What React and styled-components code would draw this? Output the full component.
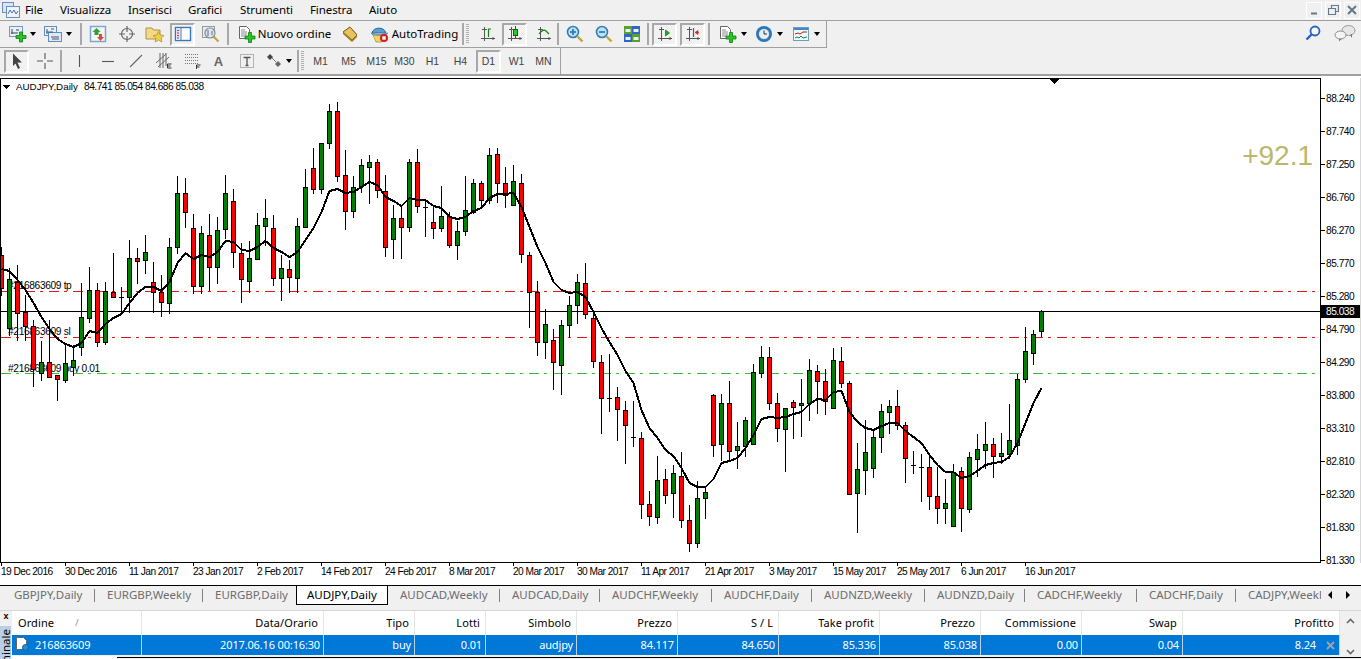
import styled, { createGlobalStyle } from 'styled-components';

const GlobalStyle = createGlobalStyle`
  html, body { margin: 0; padding: 0; background: #f0f0f0; overflow: hidden; }
  body { font-family: "Noto Sans", "Open Sans", sans-serif; font-size: 12px; color: #000; }
`;

const Page = styled.div`
  width: 1361px;
  height: 659px;
  overflow: hidden;
  display: flex;
  flex-direction: column;
`;

/* --- menu --- */
const MenuBar = styled.div`
  height: 20px;
  display: flex;
  align-items: center;
  padding-left: 2px;
`;
const MenuList = styled.div`
  display: flex;
  margin-left: 5px;
  flex: 1;
  padding-bottom: 2px;
`;
const MenuItem = styled.span`
  width: ${(p) => p.$w}px;
  font-size: 11.5px;
  letter-spacing: -0.1px;
  white-space: nowrap;
`;
const WindowBtns = styled.div`
  display: flex;
  gap: 3px;
  padding-right: 1px;
`;
const WindowBtn = styled.div`
  width: 16px;
  height: 17px;
  border: 1px solid #fff;
  display: flex;
  align-items: center;
  justify-content: center;
  box-sizing: border-box;
`;

/* --- toolbars --- */
const ToolArea = styled.div`
  border-top: 1px solid #a0a0a0;
  border-bottom: 2px solid #a0a0a0;
`;
const ToolRow = styled.div`
  display: flex;
  align-items: stretch;
  justify-content: space-between;
`;
const Toolbar = styled.div`
  width: ${(p) => p.$w}px;
  height: ${(p) => (p.$line ? 27 : 26)}px;
  display: flex;
  align-items: center;
  padding-left: ${(p) => p.$pad}px;
  box-sizing: border-box;
  border-right: 1px solid #a0a0a0;
  border-bottom: ${(p) => (p.$line ? '1px solid #a0a0a0' : 'none')};
`;
const ToolBtn = styled.div`
  width: ${(p) => p.$w || 25}px;
  height: 23px;
  margin-left: ${(p) => p.$ml || 0}px;
  flex: none;
  box-sizing: border-box;
  display: flex;
  align-items: center;
  justify-content: center;
  gap: ${(p) => p.$gap || 0}px;
  border: 1px solid transparent;
  font-size: 11.5px;
  letter-spacing: 0;
  white-space: nowrap;
  ${(p) =>
    p.$active &&
    `border-color: #a8a8a8 #fff #fff #a8a8a8;
     border-width: 2px;
     background: repeating-conic-gradient(#f7f7f7 0 25%, #ececec 0 50%) 0 0 / 2px 2px;`}
`;
const BtnText = styled.span`
  padding-bottom: 2px;
`;
const PeriodBtn = styled(ToolBtn)`
  font-family: "Liberation Sans", Arial, sans-serif;
  font-size: 10.5px;
  color: #444;
`;
const Sep = styled.div`
  width: 2px;
  height: 22px;
  background: #a8a8a8;
  margin-left: ${(p) => p.$ml || 0}px;
  flex: none;
`;
const Grip = styled.div`
  width: 3px;
  height: 20px;
  margin-left: ${(p) => p.$ml || 0}px;
  flex: none;
  background: repeating-linear-gradient(to bottom, #b0b0b0 0 1px, #f0f0f0 1px 2px);
`;
const ToolRight = styled.div`
  display: flex;
  align-items: center;
  gap: 12px;
  padding: 0 5px 3px 0;
`;
const Drop = styled.span`
  width: 0;
  height: 0;
  border-left: 3.5px solid transparent;
  border-right: 3.5px solid transparent;
  border-top: 4px solid #000;
  flex: none;
`;

/* --- chart --- */
const ChartWrap = styled.div`
  background: #fff;
  padding-top: 2px;
`;
const ChartRow = styled.div`
  display: flex;
  height: 485px;
`;
const Plot = styled.svg`
  width: 1321px;
  height: 485px;
  display: block;
  flex: none;
`;
const ChartLabel = styled.text`
  font-family: "Liberation Sans", Arial, sans-serif;
  font-size: ${(p) => p.$size || 10.2}px;
  letter-spacing: ${(p) => p.$ls ?? -0.35}px;
  fill: ${(p) => p.$color || '#000'};
`;
const PriceAxis = styled.div`
  position: relative;
  flex: 1;
  padding-top: 4px;
  font-family: "Liberation Sans", Arial, sans-serif;
  font-size: 10.2px;
  letter-spacing: -0.5px;
  border-right: 1px solid #d8d8d8;
`;
const PriceRow = styled.div`
  height: 33px;
  line-height: 33px;
  padding-left: 5px;
  position: relative;
  &::before {
    content: '';
    position: absolute;
    left: 0;
    top: 16px;
    width: 4px;
    height: 1px;
    background: #000;
  }
`;
const PriceTag = styled.div`
  position: absolute;
  left: 0;
  right: 0;
  top: 227px;
  height: 13px;
  line-height: 13px;
  padding-left: 5px;
  background: #000;
  color: #fff;
`;
const TimeAxis = styled.div`
  height: 22px;
  display: grid;
  grid-template-columns: repeat(17, 64px);
  padding-left: 1px;
  font-family: "Liberation Sans", Arial, sans-serif;
  font-size: 10.2px;
  letter-spacing: -0.55px;
`;
const TimeCell = styled.div`
  position: relative;
  white-space: nowrap;
  line-height: 17px;
  &::before {
    content: '';
    position: absolute;
    left: 0;
    top: -1px;
    width: 1px;
    height: 4px;
    background: #000;
  }
`;

/* --- tabs --- */
const TabBar = styled.div`
  height: 19px;
  border-top: 1px solid #000;
  display: flex;
  align-items: stretch;
  position: relative;
`;
const Tab = styled.div`
  width: ${(p) => p.$w}px;
  flex: none;
  box-sizing: border-box;
  padding-left: ${(p) => p.$pad || 12}px;
  line-height: 17px;
  white-space: nowrap;
  overflow: hidden;
  font-size: 11.5px;
  color: ${(p) => (p.$active ? '#000' : '#6d6d6d')};
  position: relative;
  ${(p) =>
    p.$active
      ? `background:#fff; border:1px solid #000; border-top:none;`
      : p.$sep
        ? `&::after{content:'';position:absolute;right:0;top:3px;width:1px;height:13px;background:#808080;}`
        : ''}
`;
const TabArrows = styled.div`
  position: absolute;
  right: 0;
  top: 0;
  width: 40px;
  height: 18px;
  background: #f0f0f0;
  display: flex;
  align-items: center;
  justify-content: space-around;
  padding: 0 4px 0 0;
  box-sizing: border-box;
`;
const ArrowL = styled.span`
  border-top: 4px solid transparent;
  border-bottom: 4px solid transparent;
  border-right: 4px solid #000;
`;
const ArrowR = styled.span`
  border-top: 4px solid transparent;
  border-bottom: 4px solid transparent;
  border-left: 4px solid #000;
`;

/* --- terminal --- */
const Terminal = styled.div`
  margin-top: 5px;
  flex: 1;
  display: flex;
  position: relative;
  min-height: 0;
  border-top: 1px solid #d6d6d6;
`;
const SideStrip = styled.div`
  width: 12px;
  flex: none;
  display: flex;
  flex-direction: column;
  align-items: center;
`;
const SideClose = styled.div`
  height: 15px;
  font: bold 9px "Liberation Sans", Arial, sans-serif;
  line-height: 11px;
`;
const SideTab = styled.div`
  flex: 1;
  width: 11px;
  margin-right: 1px;
  background: #b9cfe6;
  overflow: hidden;
  display: flex;
  flex-direction: column;
  align-items: center;
`;
const SideText = styled.span`
  writing-mode: vertical-rl;
  transform: rotate(180deg);
  flex: none;
  font-size: 11.5px;
  line-height: 11px;
  white-space: nowrap;
  padding-bottom: 3px;
`;
const TableBox = styled.div`
  width: 1328px;
  flex: none;
  display: flex;
  flex-direction: column;
`;
const TableRow = styled.div`
  display: flex;
  height: ${(p) => p.$h}px;
  background: ${(p) => p.$bg};
  color: ${(p) => p.$fg};
`;
const Cell = styled.div`
  width: ${(p) => p.$w}px;
  flex: none;
  box-sizing: border-box;
  display: flex;
  align-items: center;
  justify-content: ${(p) => (p.$pl ? 'flex-start' : 'flex-end')};
  gap: 6px;
  padding: ${(p) => (p.$pl ? `0 0 2px ${p.$pl}px` : `0 ${p.$pr}px 2px 0`)};
  border-right: 1px solid ${(p) => p.$line};
  font-size: 11px;
  letter-spacing: ${(p) => p.$ls || 0}px;
  white-space: nowrap;
`;
const HeadSort = styled.span`
  color: #888;
  font-size: 9px;
  margin-left: 15px;
`;
const RowClose = styled.svg`
  position: absolute;
  left: 1326px;
  top: 30px;
  width: 9px;
  height: 9px;
`;
const Scroll = styled.div`
  flex: 1;
  display: flex;
  flex-direction: column;
  align-items: center;
  justify-content: space-between;
  height: 44px;
  padding: 7px 0 0;
  box-sizing: border-box;
`;
const Footer = styled.div`
  height: 4px;
  display: flex;
  position: absolute;
  left: 12px;
  right: 0;
  top: 45px;
`;
const FooterTab = styled.div`
  width: 105px;
  background: #fff;
  height: 5px;
`;
const FooterLine = styled.div`
  flex: 1;
  border-top: 1px solid #000;
  margin-top: 1px;
`;

/* --- icons --- */
const Ico = ({ w = 18, h = 18, children }) => (
  <svg width={w} height={h} viewBox={`0 0 ${w} ${h}`} style={{ flex: 'none' }}>{children}</svg>
);
const Plus = ({ x = 0, y = 0 }) => (
  <path
    transform={`translate(${x} ${y})`}
    d="M3.5 0h3v3.5H10v3H6.500V10h-3V6.500H0v-3h3.500z"
    fill="#27c427"
    stroke="#0e7d0e"
    strokeWidth="0.8"
  />
);
const NewChartIcon = () => (
  <Ico>
    <rect x="0.500" y="1.500" width="13" height="10" fill="#e8f1fa" stroke="#6e9cc6" />
    <path d="M3 4v5M2 8h7M7 5h3" stroke="#444" fill="none" />
    <Plus x={7} y={7} />
  </Ico>
);
const ProfileIcon = () => (
  <Ico>
    <rect x="0.500" y="1.500" width="12" height="9" fill="#e8f1fa" stroke="#5f8fbd" />
    <rect x="4.500" y="7.500" width="13" height="9" fill="#dde9f5" stroke="#5f8fbd" />
    <path d="M3 4v5M2 7h7M7 4h3M7 12h8M8 14h7" stroke="#556" fill="none" />
  </Ico>
);
const WatchIcon = () => (
  <Ico>
    <rect x="1.500" y="1.500" width="15" height="15" fill="#f6f6f6" stroke="#79a7cf" strokeWidth="1.500" />
    <path d="M7.500 3l4 4h-2v3h-4V7h-2z" fill="#2da52d" />
    <path d="M10 9h3v3h2l-3.500 4L8 12h2z" fill="#e04a2a" />
  </Ico>
);
const CrossIcon = () => (
  <Ico>
    <circle cx="9" cy="9" r="5.500" fill="none" stroke="#666" strokeWidth="1.200" />
    <path d="M9 1v6M9 11v6M1 9h6M11 9h6" stroke="#666" strokeWidth="1.200" />
  </Ico>
);
const FolderStarIcon = () => (
  <Ico w={20}>
    <path d="M1 3h6l1.500 2H15v9H1z" fill="#f3d98a" stroke="#b09040" />
    <path d="M13.500 6.500l1.700 3.500 3.800.5-2.800 2.600.7 3.900-3.400-1.900-3.400 1.900.7-3.900L8 10.500l3.800-.5z" fill="#f2cf4a" stroke="#a98a2a" strokeWidth="0.700" />
  </Ico>
);
const NavIcon = () => (
  <Ico>
    <rect x="1.500" y="2.500" width="15" height="13" fill="#fff" stroke="#3a78b8" strokeWidth="1.400" />
    <rect x="2" y="3" width="4" height="12" fill="#d6e6f5" />
    <path d="M3 5.500h2M3 8h2M3 10.500h2M3 13h2" stroke="#d23030" />
    <path d="M7 3v12" stroke="#3a78b8" />
  </Ico>
);
const ChartZoomIcon = () => (
  <Ico>
    <rect x="0.500" y="1.500" width="12" height="11" fill="#e9e9e9" stroke="#999" />
    <circle cx="8" cy="8" r="5" fill="#dbe7f2" stroke="#7c8ea0" strokeWidth="1.200" />
    <path d="M6 5v6M10 6v4" stroke="#667" />
    <path d="M11.500 11.500l5 5" stroke="#c9a23a" strokeWidth="2.200" />
  </Ico>
);
const OrderIcon = () => (
  <Ico>
    <path d="M1.500 1.500h7l3 3v9h-10z" fill="#fff" stroke="#666" />
    <path d="M3 5h4M3 7h6M3 9h6M3 11h5" stroke="#888" />
    <Plus x={7} y={7.500} />
  </Ico>
);
const GoldIcon = () => (
  <Ico>
    <path d="M2 7l7-5 7 8-5 5z" fill="#d6a93e" stroke="#7a5a1a" />
    <path d="M2 7l9 8 5-5-7-8z" fill="#e8c25e" stroke="#7a5a1a" strokeWidth="0.800" />
    <path d="M2 7v2l9 8v-2zM16 10v2l-5 5v-2z" fill="#a47a22" />
  </Ico>
);
const AutoIcon = () => (
  <Ico w={20}>
    <path d="M2 8c1-6 12-7 14 0z" fill="#5a9fd4" stroke="#2a6a9a" />
    <path d="M1 8c4 2 12 2 17 0l-2 2c-3 1.500-10 1.500-13 0z" fill="#9fc8e8" stroke="#2a6a9a" strokeWidth="0.600" />
    <path d="M3 10l10 1-1 6H6z" fill="#efd56a" stroke="#a68a2a" strokeWidth="0.700" />
    <circle cx="14" cy="13" r="4" fill="#d81c1c" />
    <rect x="12.300" y="11.300" width="3.400" height="3.400" fill="#fff" />
  </Ico>
);
const LineAxes = ({ children }) => (
  <Ico>
    <path d="M5.500 2v14M2 13.500h14M3 4.500h5M14 12v3" stroke="#555" fill="none" />
    {children}
  </Ico>
);
const BarIcon = () => <LineAxes><path d="M9.500 12V4H12" stroke="#0a8a0a" strokeWidth="1.200" fill="none" /></LineAxes>;
const CandleIcon = () => (
  <LineAxes>
    <path d="M9.500 1v13" stroke="#0a7a0a" />
    <rect x="7.500" y="4.500" width="4" height="6" fill="#1fd11f" stroke="#0a6a0a" />
  </LineAxes>
);
const CurveIcon = () => <LineAxes><path d="M4 9c2-3 5-5 7-3l3 3" stroke="#0a8a0a" strokeWidth="1.200" fill="none" /></LineAxes>;
const ZoomIcon = ({ plus }) => (
  <Ico>
    <circle cx="7" cy="7" r="5.500" fill="#bfe0f5" stroke="#2f7fb5" strokeWidth="1.600" />
    <path d="M4 7h6" stroke="#2f7fb5" strokeWidth="1.800" />
    {plus && <path d="M7 4v6" stroke="#2f7fb5" strokeWidth="1.800" />}
    <path d="M11.500 11.500l5 5" stroke="#c9a23a" strokeWidth="2.400" />
  </Ico>
);
const TileIcon = () => (
  <Ico>
    <rect x="1" y="1" width="8" height="8" fill="#58a02c" />
    <rect x="9" y="1" width="8" height="8" fill="#2e66c8" />
    <rect x="1" y="9" width="8" height="8" fill="#2e66c8" />
    <rect x="9" y="9" width="8" height="8" fill="#58a02c" />
    <path d="M2.500 4h5v3h-5zM10.500 4h5v3h-5zM2.500 12h5v3h-5zM10.500 12h5v3h-5z" fill="#e8f0f8" />
  </Ico>
);
const ScrollIcon = () => <LineAxes><path d="M9.500 5v6l4-3z" fill="#19b019" stroke="#0a7a0a" strokeWidth="0.700" /></LineAxes>;
const ShiftIcon = () => (
  <LineAxes>
    <path d="M9.500 3v9" stroke="#3458a8" strokeWidth="1.200" />
    <path d="M15 7.500h-3M14 5.500l-3 2 3 2z" fill="#d83010" stroke="#d83010" strokeWidth="0.800" />
  </LineAxes>
);
const ClockIcon = () => (
  <Ico>
    <circle cx="9" cy="9" r="8" fill="#2a78b8" />
    <circle cx="9" cy="9" r="5.500" fill="#e6eef6" stroke="#145a90" strokeWidth="0.600" />
    <path d="M9 5.500V9h3" stroke="#333" fill="none" />
  </Ico>
);
const TemplateIcon = () => (
  <Ico>
    <rect x="1.500" y="2.500" width="15" height="13" fill="#f2f7fb" stroke="#6a9cc8" />
    <rect x="2" y="3" width="14" height="2" fill="#4a86c0" />
    <path d="M3 9l3-1 2 1 3-2 4 0" stroke="#a82020" fill="none" />
    <path d="M3 13l2-1 2 1 2-2 2 2 4-1" stroke="#178a17" fill="none" />
  </Ico>
);
const PointerIcon = () => (
  <Ico><path d="M5 1.500l9 9H9.500l2.500 5.500-2 1-2.500-5.500L5 14z" fill="#444" /></Ico>
);
const LinesCrossIcon = () => (
  <Ico><path d="M9 1v6M9 11v6M1 9h6M11 9h6" stroke="#555" strokeWidth="1.100" /></Ico>
);
const VLineIcon = () => <Ico><path d="M9.500 3v12" stroke="#555" strokeWidth="1.100" /></Ico>;
const HLineIcon = () => <Ico><path d="M3 9.500h12" stroke="#555" strokeWidth="1.100" /></Ico>;
const TrendIcon = () => <Ico><path d="M3 15L15 3" stroke="#666" strokeWidth="1.100" /></Ico>;
const ChannelIcon = () => (
  <Ico>
    <path d="M1 11L11 2M3 15L14 5M5 1v15M8 1v15M11 1v13" stroke="#666" fill="none" />
    <path d="M12.500 12h4M12.500 14h3M12.500 16h4M12.500 12v4" stroke="#333" fill="none" />
  </Ico>
);
const FiboIcon = () => (
  <Ico>
    <path d="M1 2.500h14M1 5.500h14M1 8.500h14M1 11.500h14" stroke="#777" strokeDasharray="1 1" />
    <path d="M12.500 13v4M12.500 13h4M12.500 15h3" stroke="#333" fill="none" />
  </Ico>
);
const TextBoxIcon = () => (
  <Ico>
    <rect x="2.500" y="2.500" width="13" height="13" fill="none" stroke="#777" strokeDasharray="1 1" />
    <path d="M5.500 5.500h7M9 5.500v8M7.500 13.500h3" stroke="#555" strokeWidth="1.300" fill="none" />
  </Ico>
);
const LetterIcon = styled.span`
  font: bold 13px "Liberation Sans", Arial, sans-serif;
  color: #666;
`;
const ShapesIcon = () => (
  <Ico>
    <path d="M5 2l3 3-3 3-3-3z" fill="#444" />
    <path d="M13 9l3 3-3 3-3-3z" fill="#666" />
    <path d="M7 6l4 4" stroke="#777" />
  </Ico>
);
const LogoIcon = () => (
  <Ico>
    <rect x="0.500" y="1.500" width="11" height="10" fill="#d8e6f4" stroke="#6c8fc0" />
    <rect x="4.500" y="5.500" width="13" height="11" fill="#eef4fb" stroke="#6c8fc0" />
    <path d="M6 13l2-4 2 3 2-3 2 4 2-3" stroke="#4f6fa8" fill="none" />
  </Ico>
);
const SearchIcon = () => (
  <Ico>
    <circle cx="11" cy="7" r="4.500" fill="#f4f8fc" stroke="#2a62c2" strokeWidth="1.800" />
    <path d="M7.500 10.500L2.500 15.500" stroke="#2a62c2" strokeWidth="2.400" />
  </Ico>
);
const ChatIcon = () => (
  <Ico w={22}>
    <ellipse cx="14.500" cy="6.500" rx="6.500" ry="5" fill="#e6e6e6" stroke="#9a9a9a" />
    <path d="M16 11l2 3 0-4z" fill="#777" />
    <ellipse cx="6.500" cy="11" rx="5.500" ry="4" fill="#f4f4f4" stroke="#8a8a8a" />
    <path d="M5 15l0 2.500 3-3z" fill="#777" />
  </Ico>
);
const Chevron = ({ down }) => (
  <svg width="9" height="6" viewBox="0 0 9 6">
    <path d={down ? 'M1 1l3.500 3.500L8 1' : 'M1 5l3.500-3.500L8 5'} fill="none" stroke="#666" strokeWidth="1.600" />
  </svg>
);

/* --- data --- */
const menu = [
  ['File', 35], ['Visualizza', 68], ['Inserisci', 60], ['Grafici', 52], ['Strumenti', 70], ['Finestra', 59], ['Aiuto', 40],
];

const priceLabels = [
  '88.240', '87.740', '87.250', '86.760', '86.270', '85.770', '85.280', '84.790',
  '84.290', '83.800', '83.310', '82.810', '82.320', '81.830', '81.330',
];
const timeLabels = [
  '19 Dec 2016', '30 Dec 2016', '11 Jan 2017', '23 Jan 2017', '2 Feb 2017', '14 Feb 2017',
  '24 Feb 2017', '8 Mar 2017', '20 Mar 2017', '30 Mar 2017', '11 Apr 2017', '21 Apr 2017',
  '3 May 2017', '15 May 2017', '25 May 2017', '6 Jun 2017', '16 Jun 2017',
];
const tabs = [
  ['GBPJPY,Daily', 95, 14], ['EURGBP,Weekly', 108], ['EURGBP,Daily', 93], ['AUDJPY,Daily', 92, 10],
  ['AUDCAD,Weekly', 112], ['AUDCAD,Daily', 100], ['AUDCHF,Weekly', 112], ['AUDCHF,Daily', 100],
  ['AUDNZD,Weekly', 113], ['AUDNZD,Daily', 100], ['CADCHF,Weekly', 112], ['CADCHF,Daily', 99], ['CADJPY,Weekly', 96],
];
const columns = [
  [130, 'Ordine', '216863609'], [182, 'Data/Orario', '2017.06.16 00:16:30'], [91, 'Tipo', 'buy'],
  [71, 'Lotti', '0.01'], [91, 'Simbolo', 'audjpy'], [101, 'Prezzo', '84.117'], [101, 'S / L', '84.650'],
  [101, 'Take profit', '85.336'], [101, 'Prezzo', '85.038'], [101, 'Commissione', '0.00'],
  [101, 'Swap', '0.04'], [157, 'Profitto', '8.24'],
];

// hi, body top, body bottom, lo, colour - pixel rows read from the chart
const candles = [
  [247,255,288,295,'r'],[268,279,328,335,'g'],[265,282,313,340,'r'],[295,312,326,340,'r'],[320,326,369,386,'r'],
  [341,362,373,380,'g'],[320,362,377,377,'r'],[375,375,379,400,'r'],[345,363,380,382,'g'],[345,360,367,375,'g'],
  [283,317,347,355,'g'],[267,290,318,322,'g'],[283,290,342,346,'r'],[282,291,342,344,'g'],[253,292,297,297,'r'],
  [287,297,297,312,'g'],[240,258,297,312,'g'],[248,258,261,283,'r'],[235,252,260,273,'g'],[262,282,292,312,'r'],
  [275,292,302,316,'r'],[238,247,303,313,'g'],[176,193,247,253,'g'],[178,193,212,227,'r'],[214,228,286,293,'r'],
  [226,233,286,293,'g'],[214,235,267,290,'r'],[217,230,267,283,'g'],[175,193,229,238,'g'],[189,201,252,267,'r'],
  [243,253,279,302,'r'],[241,258,281,292,'g'],[213,225,259,259,'g'],[199,218,226,245,'g'],[215,228,278,285,'r'],
  [255,268,278,300,'g'],[260,269,277,292,'r'],[218,226,278,292,'g'],[169,187,227,227,'g'],[148,168,189,193,'r'],
  [143,143,189,193,'g'],[104,111,143,148,'g'],[102,111,176,181,'r'],[150,175,211,229,'r'],[176,187,211,217,'g'],
  [159,165,186,192,'g'],[155,162,167,203,'g'],[159,162,190,197,'r'],[175,191,247,256,'r'],[205,218,239,258,'g'],
  [205,218,227,258,'r'],[159,162,227,231,'g'],[149,162,206,212,'r'],[200,207,207,236,'g'],[206,222,228,238,'r'],
  [186,216,228,231,'g'],[212,216,245,247,'r'],[221,231,245,259,'g'],[176,210,231,235,'g'],[179,183,212,213,'g'],
  [181,183,200,208,'r'],[148,155,200,203,'g'],[148,154,183,202,'r'],[167,183,195,207,'r'],[165,181,205,205,'g'],
  [174,183,254,262,'r'],[252,255,292,327,'r'],[281,292,342,355,'r'],[309,324,342,358,'g'],[329,340,362,389,'r'],
  [320,325,365,394,'g'],[296,305,325,337,'g'],[274,282,305,323,'g'],[263,283,314,318,'r'],[312,318,361,367,'r'],
  [355,362,398,433,'r'],[354,398,398,411,'g'],[387,397,409,440,'r'],[401,410,425,463,'r'],[401,437,437,446,'g'],
  [432,438,504,518,'r'],[491,504,516,525,'r'],[456,480,517,523,'g'],[469,479,495,503,'r'],[465,473,493,517,'g'],
  [452,476,520,527,'r'],[505,520,543,551,'r'],[481,498,543,547,'g'],[487,492,498,518,'g'],[394,395,445,456,'r'],
  [394,403,444,460,'g'],[381,403,451,461,'r'],[422,446,450,468,'g'],[417,420,446,456,'g'],[364,372,444,444,'g'],
  [346,357,373,377,'g'],[347,357,403,409,'r'],[393,403,428,441,'r'],[408,408,429,471,'g'],[400,402,407,438,'r'],
  [379,403,405,436,'g'],[359,370,403,420,'g'],[365,371,381,413,'r'],[369,381,401,414,'r'],[348,360,408,408,'g'],
  [347,361,383,387,'r'],[381,383,494,494,'r'],[443,469,493,532,'g'],[420,452,470,494,'g'],[429,437,468,477,'g'],
  [404,411,437,452,'g'],[400,406,412,433,'g'],[390,406,425,429,'r'],[422,425,458,482,'r'],[451,465,465,473,'g'],
  [454,467,467,501,'g'],[455,467,496,509,'r'],[467,496,508,523,'r'],[479,503,508,523,'g'],[464,472,526,526,'g'],
  [467,471,508,531,'r'],[452,457,509,512,'g'],[434,449,459,476,'g'],[422,444,450,468,'g'],[438,444,456,477,'r'],
  [433,453,456,463,'g'],[404,440,454,458,'g'],[374,379,445,454,'g'],[327,351,379,382,'g'],[330,334,353,364,'g'],
  [310,311,331,336,'g'],
];

// moving average, one y per candle
const ma = [
  269,271,280,290,303,317,329,339,344,347,343,331,333,324,318,314,303,293,287,287,
  291,282,263,253,259,255,257,252,241,242,250,251,247,241,248,252,257,252,240,228,
  212,191,189,193,192,187,182,185,197,201,206,198,200,200,206,208,217,219,217,211,
  208,198,194,194,193,207,227,247,263,282,290,293,292,297,312,328,342,355,371,383,
  410,428,438,450,456,468,483,487,487,479,463,461,458,448,435,419,417,418,417,414,
  412,404,399,400,392,391,412,422,428,430,426,423,423,431,437,443,455,465,472,472,
  478,476,471,465,463,462,457,443,423,403,388,
];

const cx = (i) => 1 + 8 * i;
const fills = { r: '#ff0000', g: '#008000' };

function Candle({ d, i }) {
  const [hi, top, bottom, lo, col] = d;
  const x = cx(i);
  return (
    <g>
      <path d={`M${x + 0.5} ${hi}V${lo + 1}`} stroke="#000" />
      {top === bottom ? (
        <path d={`M${x - 2} ${top + 0.5}h5`} stroke="#000" />
      ) : (
        <rect x={x - 1.5} y={top + 0.5} width="4" height={bottom - top} fill={fills[col]} stroke="#000" />
      )}
    </g>
  );
}

function Chart() {
  const maPoints = ma.map((y, i) => `${cx(i) + 0.5},${y}`).join(' ');
  return (
    <Plot viewBox="0 78 1321 485" shapeRendering="crispEdges">
      <ChartLabel x="8" y="289">#216863609 tp</ChartLabel>
      <ChartLabel x="8" y="335">#216863609 sl</ChartLabel>
      <ChartLabel x="8" y="372">#216863609 buy 0.01</ChartLabel>
      <path d="M1 291.500H1320" stroke="#e01818" strokeDasharray="10 5 3 6" />
      <path d="M1 337.500H1320" stroke="#e01818" strokeDasharray="10 5 3 6" />
      <path d="M1 373.500H1320" stroke="#3cb83c" strokeDasharray="10 5 3 6" />
      <path d="M1 311.500H1320" stroke="#000" />
      {candles.map((d, i) => <Candle key={i} d={d} i={i} />)}
      <polyline points={maPoints} fill="none" stroke="#000" strokeWidth="2" />
      <rect x="0.500" y="78.500" width="1320" height="484" fill="none" stroke="#000" />
      <path d="M1050 79h9l-4.500 5z" fill="#000" />
      <path d="M3 85h7l-3.500 4z" fill="#000" />
      <ChartLabel x="16" y="90" $size={9.8} $ls={0}>AUDJPY,Daily</ChartLabel>
      <ChartLabel x="84" y="90" $ls={-0.5}>84.741 85.054 84.686 85.038</ChartLabel>
      <ChartLabel x="1313" y="165" textAnchor="end" $size={28} $ls={0} $color="#bdb76b">+92.1</ChartLabel>
    </Plot>
  );
}

export default function App() {
  return (
    <Page>
      <GlobalStyle />
      <MenuBar>
        <LogoIcon />
        <MenuList>
          {menu.map(([label, w]) => <MenuItem key={label} $w={w}>{label}</MenuItem>)}
        </MenuList>
        <WindowBtns>
          <WindowBtn>
            <svg width="9" height="9"><path d="M1 7.500h6" stroke="#66788a" strokeWidth="2" /></svg>
          </WindowBtn>
          <WindowBtn>
            <svg width="11" height="11"><path d="M3.500 3V.5h7v6H8M.5 3.500h7v6h-7z" fill="none" stroke="#66788a" strokeWidth="1.200" /></svg>
          </WindowBtn>
          <WindowBtn>
            <svg width="10" height="10"><path d="M1 1l8 8M9 1L1 9" stroke="#66788a" strokeWidth="2" /></svg>
          </WindowBtn>
        </WindowBtns>
      </MenuBar>

      <ToolArea>
        <ToolRow>
          <Toolbar $w={827} $pad={4} $line>
            <ToolBtn $w={36} $gap={3}><NewChartIcon /><Drop /></ToolBtn>
            <ToolBtn $w={36} $gap={4}><ProfileIcon /><Drop /></ToolBtn>
            <Sep $ml={4} />
            <ToolBtn $ml={3}><WatchIcon /></ToolBtn>
            <ToolBtn $ml={4}><CrossIcon /></ToolBtn>
            <ToolBtn $ml={3}><FolderStarIcon /></ToolBtn>
            <ToolBtn $ml={3} $active><NavIcon /></ToolBtn>
            <ToolBtn $ml={3}><ChartZoomIcon /></ToolBtn>
            <Sep $ml={4} />
            <ToolBtn $w={99} $ml={6} $gap={2}><OrderIcon /><BtnText>Nuovo ordine</BtnText></ToolBtn>
            <ToolBtn $ml={3}><GoldIcon /></ToolBtn>
            <ToolBtn $w={92} $ml={6} $gap={2}><AutoIcon /><BtnText>AutoTrading</BtnText></ToolBtn>
            <Sep $ml={2} />
            <Grip $ml={2} />
            <ToolBtn $ml={6}><BarIcon /></ToolBtn>
            <ToolBtn $ml={2} $active><CandleIcon /></ToolBtn>
            <ToolBtn $ml={4}><CurveIcon /></ToolBtn>
            <Sep $ml={1} />
            <ToolBtn $ml={3}><ZoomIcon plus /></ToolBtn>
            <ToolBtn $ml={4}><ZoomIcon /></ToolBtn>
            <ToolBtn $ml={3}><TileIcon /></ToolBtn>
            <Sep $ml={3} />
            <ToolBtn $ml={3} $active><ScrollIcon /></ToolBtn>
            <ToolBtn $ml={3} $active><ShiftIcon /></ToolBtn>
            <Sep $ml={3} />
            <ToolBtn $w={33} $ml={6} $gap={4}><OrderIcon /><Drop /></ToolBtn>
            <ToolBtn $w={33} $ml={3} $gap={4}><ClockIcon /><Drop /></ToolBtn>
            <ToolBtn $w={33} $ml={4} $gap={4}><TemplateIcon /><Drop /></ToolBtn>
          </Toolbar>
          <ToolRight>
            <SearchIcon />
            <ChatIcon />
          </ToolRight>
        </ToolRow>
        <Toolbar $w={561} $pad={4}>
          <ToolBtn $active><PointerIcon /></ToolBtn>
          <ToolBtn $ml={3}><LinesCrossIcon /></ToolBtn>
          <Sep $ml={3} />
          <ToolBtn $ml={4}><VLineIcon /></ToolBtn>
          <ToolBtn $ml={4}><HLineIcon /></ToolBtn>
          <ToolBtn $ml={3}><TrendIcon /></ToolBtn>
          <ToolBtn $ml={3}><ChannelIcon /></ToolBtn>
          <ToolBtn $ml={4}><FiboIcon /></ToolBtn>
          <ToolBtn $ml={1}><LetterIcon>A</LetterIcon></ToolBtn>
          <ToolBtn $ml={3}><TextBoxIcon /></ToolBtn>
          <ToolBtn $w={33} $ml={3} $gap={3}><ShapesIcon /><Drop /></ToolBtn>
          <Sep $ml={2} />
          <Grip $ml={2} />
          {['M1', 'M5', 'M15', 'M30', 'H1', 'H4'].map((p, i) => (
            <PeriodBtn key={p} $ml={i === 0 ? 4 : 3}>{p}</PeriodBtn>
          ))}
          <PeriodBtn $ml={3} $active>D1</PeriodBtn>
          <PeriodBtn $ml={3}>W1</PeriodBtn>
          <PeriodBtn $ml={2}>MN</PeriodBtn>
        </Toolbar>
      </ToolArea>

      <ChartWrap>
        <ChartRow>
          <Chart />
          <PriceAxis>
            {priceLabels.map((p) => <PriceRow key={p}>{p}</PriceRow>)}
            <PriceTag>85.038</PriceTag>
          </PriceAxis>
        </ChartRow>
        <TimeAxis>
          {timeLabels.map((t) => <TimeCell key={t}>{t}</TimeCell>)}
        </TimeAxis>
      </ChartWrap>

      <TabBar>
        {tabs.map(([label, w, pad], i) => (
          <Tab key={label} $w={w} $pad={pad} $active={i === 3} $sep={i !== 2 && i !== 3 && i < 12}>{label}</Tab>
        ))}
        <TabArrows><ArrowL /><ArrowR /></TabArrows>
      </TabBar>

      <Terminal>
        <SideStrip>
          <SideClose>x</SideClose>
          <SideTab><SideText>Terminale</SideText></SideTab>
        </SideStrip>
        <TableBox>
          <TableRow $h={24} $bg="#fff" $fg="#000">
            {columns.map(([w, head], i) => (
              <Cell key={i} $w={w} $pl={i === 0 ? 6 : 0} $pr={5} $ls={0.1} $line="#e5e5e5">
                {head}{i === 0 && <HeadSort>/</HeadSort>}
              </Cell>
            ))}
          </TableRow>
          <TableRow $h={20} $bg="#0078d7" $fg="#fff">
            {columns.map(([w, , value], i) => (
              <Cell key={i} $w={w} $pl={i === 0 ? 3 : 0} $pr={i === 11 ? 23 : 3} $ls={-0.15} $line="#b9d3ea">
                {i === 0 && (
                  <svg width="14" height="14" viewBox="0 0 14 14">
                    <path d="M1.500.5h7l3 3v9h-10z" fill="#fff" stroke="#666" />
                    <circle cx="10.500" cy="10.500" r="3" fill="#1f8fe0" stroke="#0d5f9e" />
                  </svg>
                )}
                {value}
              </Cell>
            ))}
          </TableRow>
        </TableBox>
        <Scroll>
          <Chevron />
          <Chevron down />
        </Scroll>
        <RowClose viewBox="0 0 9 9"><path d="M1 1l7 7M8 1L1 8" stroke="#9aa4ae" strokeWidth="2" /></RowClose>
        <Footer>
          <FooterTab />
          <FooterLine />
        </Footer>
      </Terminal>
    </Page>
  );
}
